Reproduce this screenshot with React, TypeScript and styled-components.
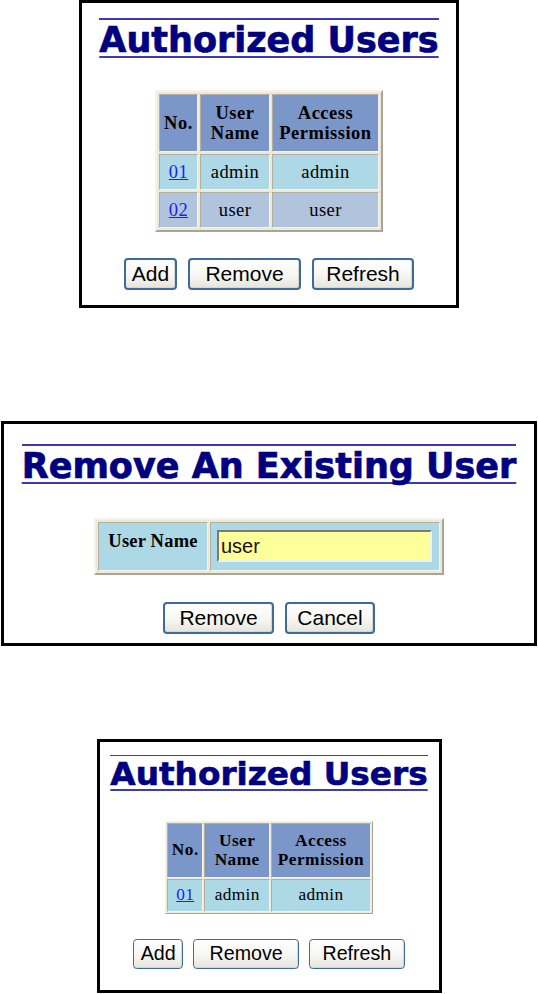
import React from 'react';
import styled, { createGlobalStyle } from 'styled-components';

const GlobalStyle = createGlobalStyle`
  html, body {
    margin: 0;
    padding: 0;
    background: #ffffff;
  }
  body {
    width: 538px;
    height: 994px;
    overflow: hidden;
    font-family: "Liberation Serif", "Times New Roman", serif;
  }
`;

const Page = styled.div`
  width: 538px;
  display: flex;
  flex-direction: column;
  align-items: center;
`;

const Frame = styled.section<{ $w: number; $h: number; $pt: number; $mt: number }>`
  box-sizing: border-box;
  width: ${p => p.$w}px;
  height: ${p => p.$h}px;
  margin-top: ${p => p.$mt}px;
  padding-top: ${p => p.$pt}px;
  border: 3px solid #000000;
  background: #ffffff;
  display: flex;
  flex-direction: column;
  align-items: center;
  overflow: hidden;
`;

const Content = styled.div<{ $zoom: number }>`
  display: flex;
  flex-direction: column;
  align-items: center;
  zoom: ${p => p.$zoom};
`;

const Title = styled.h1`
  margin: 0;
  border-top: 2px solid #3c3cb0;
  font-family: "DejaVu Sans", Verdana, sans-serif;
  font-weight: bold;
  font-size: 35px;
  line-height: 40px;
  color: #000080;
  -webkit-text-stroke: 0.7px #000080;
  white-space: nowrap;
  text-decoration: underline;
  text-decoration-color: #3c3cb0;
  text-decoration-thickness: 2px;
  text-underline-offset: 4px;
  text-decoration-skip-ink: none;
`;

const Grid = styled.table<{ $mt: number }>`
  margin-top: ${p => p.$mt}px;
  border-collapse: separate;
  border-spacing: 2px;
  border: 2px solid;
  border-color: #f4f2ea #a9a595 #a9a595 #f4f2ea;
  background: #ece9d8;
`;

const HeadCell = styled.th<{ $w: number }>`
  box-sizing: border-box;
  width: ${p => p.$w}px;
  height: 58px;
  padding: 0 1px;
  background: #7b96c8;
  border: 1px solid;
  border-color: #b3af9f #f6f4ec #f6f4ec #b3af9f;
  font-family: "Liberation Serif", "Times New Roman", serif;
  font-weight: bold;
  font-size: 18.5px;
  line-height: 20px;
  letter-spacing: 0.5px;
  color: #000000;
  text-align: center;
  vertical-align: middle;
`;

const Cell = styled.td<{ $bg: string }>`
  box-sizing: border-box;
  height: 36px;
  padding: 0;
  background: ${p => p.$bg};
  border: 1px solid;
  border-color: #b3af9f #f6f4ec #f6f4ec #b3af9f;
  font-family: "Liberation Serif", "Times New Roman", serif;
  font-size: 18.5px;
  line-height: 20px;
  letter-spacing: 0.4px;
  color: #000000;
  text-align: center;
  vertical-align: middle;
`;

const NumLink = styled.a`
  color: #1c1cff;
  text-decoration: underline;
`;

const LabelCell = styled.th`
  box-sizing: border-box;
  width: 110px;
  height: 49px;
  padding: 8px 0 0;
  background: #add8e6;
  border: 1px solid;
  border-color: #b3af9f #f6f4ec #f6f4ec #b3af9f;
  font-family: "Liberation Serif", "Times New Roman", serif;
  font-weight: bold;
  font-size: 18.5px;
  line-height: 20px;
  letter-spacing: 0.2px;
  color: #000000;
  white-space: nowrap;
  text-align: center;
  vertical-align: top;
`;

const FieldCell = styled.td`
  box-sizing: border-box;
  width: 230px;
  height: 49px;
  padding: 7px 7px 8px 6px;
  background: #add8e6;
  border: 1px solid;
  border-color: #b3af9f #f6f4ec #f6f4ec #b3af9f;
  vertical-align: top;
`;

const TextInput = styled.input`
  box-sizing: border-box;
  display: block;
  width: 215px;
  height: 32px;
  margin: 0;
  padding: 0 2px;
  background: #ffff99;
  border: 2px solid;
  border-color: #7b7a74 #f2f1ea #f2f1ea #7b7a74;
  font-family: "Liberation Sans", Arial, sans-serif;
  font-size: 20px;
  color: #1a1010;
  outline: none;
`;

const ButtonRow = styled.div<{ $mt: number }>`
  margin-top: ${p => p.$mt}px;
  display: flex;
  gap: 11px;
`;

const Button = styled.button<{ $w: number }>`
  box-sizing: border-box;
  width: ${p => p.$w}px;
  height: 32px;
  padding: 0;
  border: 2px solid #3f6b9c;
  border-radius: 4px;
  background: linear-gradient(#ffffff 0%, #f7f6f2 55%, #e6e4dc 100%);
  box-shadow: inset -1px -1px 0 #d9d6cb;
  font-family: "Liberation Sans", Arial, sans-serif;
  font-size: 21px;
  color: #000000;
  cursor: pointer;
`;

type User = { no: string; name: string; perm: string; bg: string };

const allUsers: User[] = [
  { no: '01', name: 'admin', perm: 'admin', bg: '#add8e6' },
  { no: '02', name: 'user', perm: 'user', bg: '#b0c4de' },
];

const UsersPanel: React.FC<{ users: User[] }> = ({ users }) => (
  <>
    <Title>Authorized Users</Title>
    <Grid $mt={30}>
      <thead>
        <tr>
          <HeadCell $w={39}>No.</HeadCell>
          <HeadCell $w={70}>User<br />Name</HeadCell>
          <HeadCell $w={107}>Access<br />Permission</HeadCell>
        </tr>
      </thead>
      <tbody>
        {users.map(u => (
          <tr key={u.no}>
            <Cell $bg={u.bg}><NumLink href="#">{u.no}</NumLink></Cell>
            <Cell $bg={u.bg}>{u.name}</Cell>
            <Cell $bg={u.bg}>{u.perm}</Cell>
          </tr>
        ))}
      </tbody>
    </Grid>
    <ButtonRow $mt={26}>
      <Button $w={53}>Add</Button>
      <Button $w={113}>Remove</Button>
      <Button $w={102}>Refresh</Button>
    </ButtonRow>
  </>
);

const App: React.FC = () => (
  <Page>
    <GlobalStyle />

    <Frame $w={380} $h={308} $pt={15} $mt={0}>
      <Content $zoom={1}>
        <UsersPanel users={allUsers} />
      </Content>
    </Frame>

    <Frame $w={536} $h={225} $pt={20} $mt={113}>
      <Content $zoom={1}>
        <Title>Remove An Existing User</Title>
        <Grid $mt={32}>
          <tbody>
            <tr>
              <LabelCell>User Name</LabelCell>
              <FieldCell>
                <TextInput defaultValue="user" />
              </FieldCell>
            </tr>
          </tbody>
        </Grid>
        <ButtonRow $mt={27}>
          <Button $w={111}>Remove</Button>
          <Button $w={90}>Cancel</Button>
        </ButtonRow>
      </Content>
    </Frame>

    <Frame $w={345} $h={254} $pt={13} $mt={93}>
      <Content $zoom={0.935}>
        <UsersPanel users={allUsers.slice(0, 1)} />
      </Content>
    </Frame>
  </Page>
);

export default App;
